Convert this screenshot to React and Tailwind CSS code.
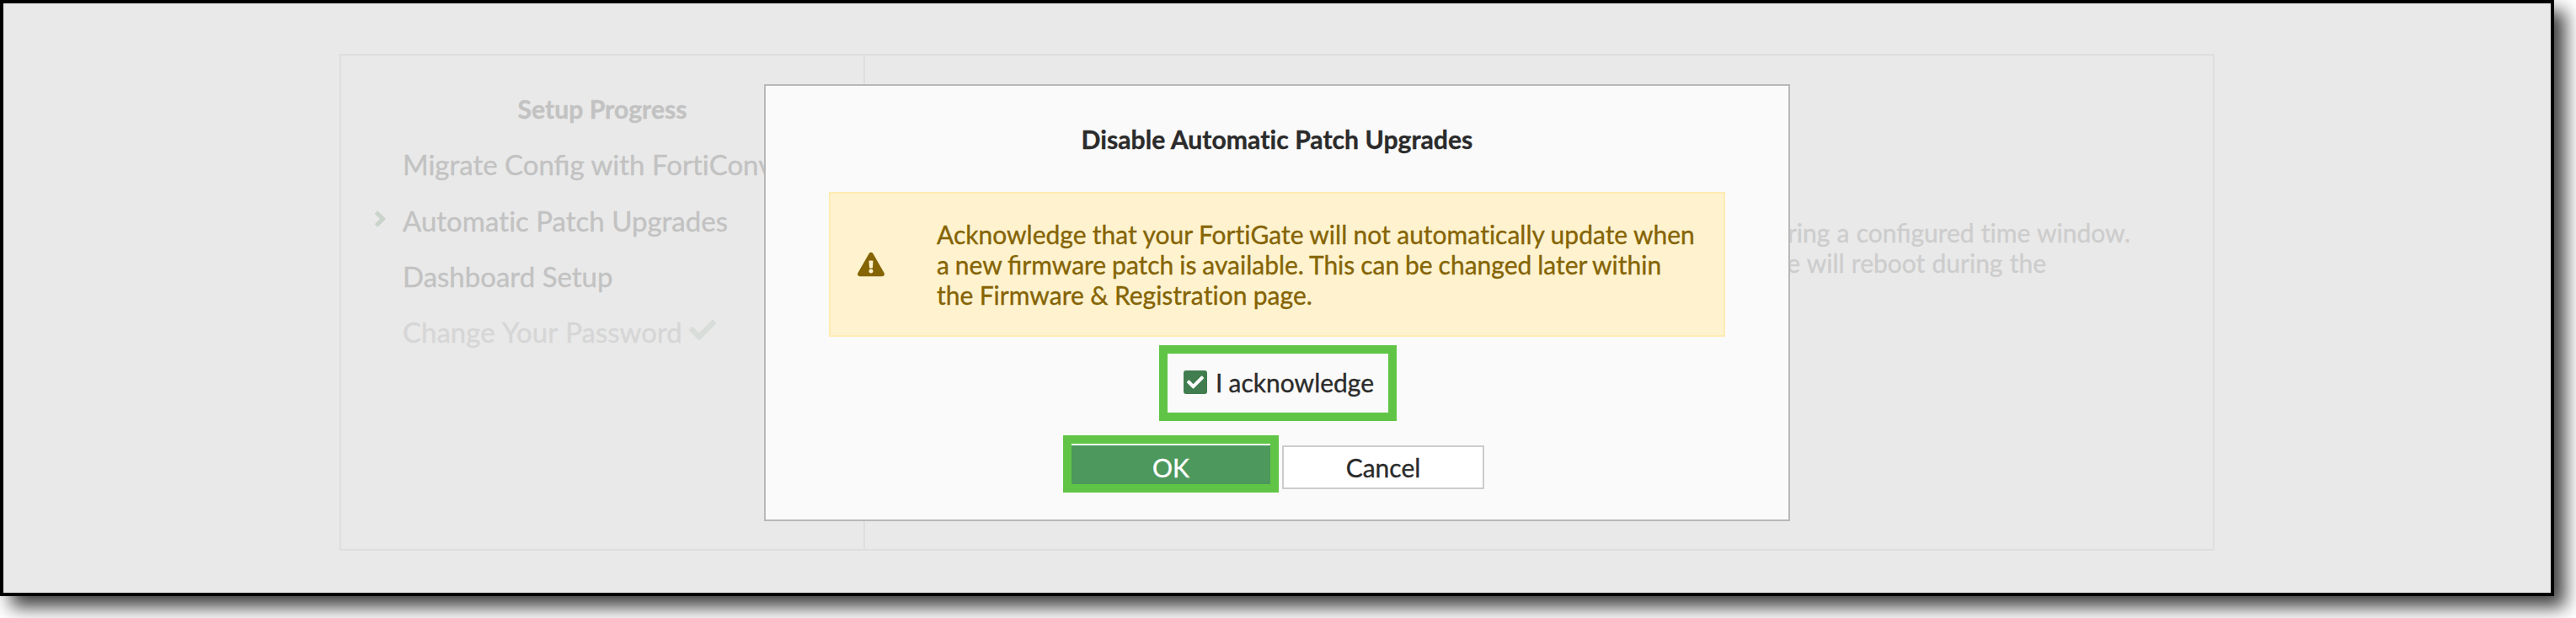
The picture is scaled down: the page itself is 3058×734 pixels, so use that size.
import React from "react";
import { FaCheck, FaExclamationTriangle } from "react-icons/fa";

const steps = [
  { label: "Migrate Config with FortiConverter" },
  { label: "Automatic Patch Upgrades", current: true },
  { label: "Dashboard Setup" },
  { label: "Change Your Password", done: true },
];

// Keeps the "fi" ligature but sets "ti" as two separate letters.
function T({ children }) {
  return (
    <span className="whitespace-nowrap">
      {children.split(/(ti)/).map((part, i) =>
        part === "ti" ? <span key={i} className="[font-variant-ligatures:none]">ti</span> : part
      )}
    </span>
  );
}

function SetupPanel() {
  return (
    <div className="flex h-[590px] w-[2226px] border-2 border-[#dedede]">
      <aside className="w-[622px] shrink-0 border-r-2 border-[#dedede] pt-[45px]">
        <h2 className="text-center text-[30.2px] leading-[36px] font-bold text-[#c2c2c2]"><T>Setup Progress</T></h2>
        <ul className="mt-[16px] text-[33px] leading-[66px] text-[#c2c2c2]">
          {steps.map((s) => (
            <li key={s.label} className={s.done ? "flex h-[66px] items-center text-[#d6d6d6] [word-spacing:1.3px]" : "flex h-[66px] items-center first:pb-[2px]"}>
              <span className="w-[73px] shrink-0 pl-[31px]">
                {s.current && (
                  <svg viewBox="0 0 40 40" className="mb-[4px] size-[40px]" fill="none" stroke="#cad4cb" strokeWidth="5">
                    <path d="M10.5 12l8 8-8 8" />
                  </svg>
                )}
              </span>
              <T>{s.label}</T>
              {s.done && <FaCheck className="ml-[8px] mb-[4px] size-[32px] text-[#d8ddd9]" />}
            </li>
          ))}
        </ul>
      </aside>
      <section className="flex flex-1 flex-col items-end pt-[192px] pr-[98px] text-[30px] leading-[36px] text-[#cdcdcd] [word-spacing:0.5px]">
        <p><T>during a configured time window.</T></p>
        <p className="mr-[100px]"><T>device will reboot during the</T></p>
      </section>
    </div>
  );
}

function Dialog() {
  return (
    <div className="absolute top-[96px] left-[903px] flex h-[519px] w-[1218px] flex-col items-center border-2 border-[#b8b8b8] bg-[#fafafa] text-[30px] leading-[36px] text-[#2b2b2b]">
      <h1 className="mt-[45px] text-[30.2px] font-bold"><T>Disable Automatic Patch Upgrades</T></h1>
      <div className="mt-[45px] flex h-[172px] w-[1064px] shrink-0 items-center border-2 border-[#ffebb3] bg-[#fff3cf] text-[#856404]">
        <FaExclamationTriangle className="ml-[32px] size-[32px] shrink-0" />
        <div className="ml-[62px]">
          <p className="[word-spacing:-0.3px]"><T>Acknowledge that your FortiGate will not automatically update when</T></p>
          <p className="[word-spacing:-0.8px]"><T>a new firmware patch is available. This can be changed later within</T></p>
          <p className="[word-spacing:-0.3px]"><T>the Firmware &amp; Registration page.</T></p>
        </div>
      </div>
      <label className="mt-[10px] ml-[2px] flex h-[90px] w-[282px] shrink-0 items-center border-[10px] border-[#60c546] pb-[2px] pl-[19px]">
        <span className="flex size-[28px] shrink-0 items-center justify-center rounded-[3px] bg-[#417d4f]">
          <FaCheck className="size-[20px] text-white" />
        </span>
        <span className="ml-[10px] [word-spacing:-0.5px]"><T>I acknowledge</T></span>
      </label>
      <div className="mt-[17px] flex w-[508px] gap-[4px]">
        <button className="h-[68px] w-[256px] border-[10px] border-[#60c546] bg-[#4d985d] text-white">
          <span className="flex h-[48px] items-center justify-center border-t-2 border-white pt-[5px]"><T>OK</T></span>
        </button>
        <button className="mt-[12px] h-[52px] w-[240px] border-2 border-[#cccccc] bg-white"><T>Cancel</T></button>
      </div>
    </div>
  );
}

export default function App() {
  return (
    <div className="h-[734px] w-[3058px] overflow-hidden bg-white font-['Lato',sans-serif] [-webkit-text-stroke:0.35px]">
      <div className="relative h-[708px] w-[3032px] border-4 border-black bg-[#e9e9e9] pt-[60px] pl-[399px] shadow-[13px_13px_20px_rgba(0,0,0,0.75)]">
        <SetupPanel />
        <Dialog />
      </div>
    </div>
  );
}
